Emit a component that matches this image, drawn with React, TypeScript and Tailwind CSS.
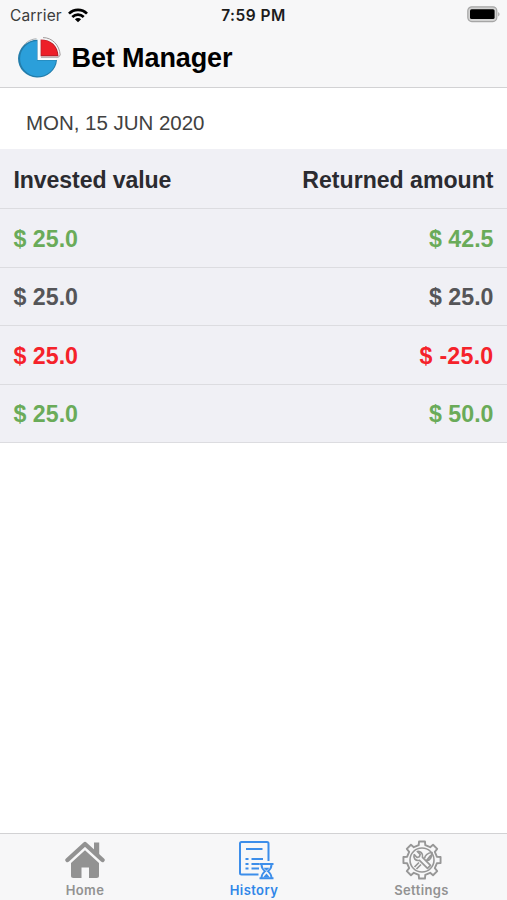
import React from "react";

interface Bet {
  invested: string;
  returned: string;
  color: string;
}

const bets: Bet[] = [
  { invested: "$ 25.0", returned: "$ 42.5", color: "text-[#6aab59]" },
  { invested: "$ 25.0", returned: "$ 25.0", color: "text-[#555558]" },
  { invested: "$ 25.0", returned: "$ -25.0", color: "text-[#f5222a]" },
  { invested: "$ 25.0", returned: "$ 50.0", color: "text-[#6aab59]" },
];

const WifiIcon = () => (
  <svg width="20" height="15" viewBox="0 0 20 15" fill="none" stroke="#000" strokeWidth="2.7">
    <path d="M1 5.6C6 .6 14 .6 19 5.6" />
    <path d="M4.3 9C7.6 5.8 12.4 5.8 15.7 9" />
    <path d="M10 14.3 6.9 11.3C8.7 9.7 11.3 9.7 13.1 11.3Z" fill="#000" stroke="none" />
  </svg>
);

const BatteryIcon = () => (
  <svg width="33" height="17" viewBox="0 0 33 17">
    <rect x=".8" y=".8" width="29" height="14.8" rx="4" fill="#d2d2d2" stroke="#a6a6a6" strokeWidth="1.2" />
    <rect x="3" y="3.2" width="24.6" height="9.8" rx="1.6" fill="#000" />
    <path d="M31.2 6v4.4c1.8-.7 1.8-3.7 0-4.4Z" fill="#a6a6a6" />
  </svg>
);

const Logo = () => (
  <svg width="44" height="44" viewBox="0 0 44 44">
    <path d="M3 14C6 7 12 3 18.5 2.8" fill="none" stroke="#a9adb0" strokeWidth="1" />
    <path d="M19.5 3.8V24H39A19.5 18.9 0 1 1 19.5 3.8Z" fill="#237dab" />
    <path d="M19 5V24.5H38A18 17.6 0 1 1 19 5Z" fill="#2b9fda" />
    <path d="M20.8 4V23.2H38" fill="none" stroke="#fff" strokeWidth="1.6" />
    <path d="M25 1.6C34 1.5 41.5 9 42.2 19L40.5 21.2H23" fill="none" stroke="#a09a9a" strokeWidth="1" />
    <path d="M22.6 3.5C33 3.5 40 9.5 40.5 20.3H22.6Z" fill="#b31f27" />
    <path d="M23.3 4C32.5 4 38.7 10 39.5 19.3H23.3Z" fill="#ed1f28" />
  </svg>
);

const HomeIcon = () => (
  <svg width="40" height="40" viewBox="0 0 40 40" fill="#929292">
    <path d="M2.5 20 20 4 37.5 20" fill="none" stroke="#929292" strokeWidth="4.4" strokeLinecap="round" strokeLinejoin="round" />
    <path d="M29 2.5h5.2v15L29 12.5Z" />
    <path d="M6 23 20 10.3 34 23v12.5c0 1.8-.8 2.5-2.5 2.5H24V27.5h-7.5V38H8.5C6.800 38 6 37.3 6 35.5Z" />
  </svg>
);

const HistoryIcon = () => (
  <svg width="36" height="40" viewBox="0 0 36 40" fill="none" stroke="#3d8eea" strokeWidth="2">
    <path d="M20.5 34.5H3.5a1.5 1.5 0 0 1-1.5-1.5V3.5A1.5 1.5 0 0 1 3.5 2h25.5a1.5 1.5 0 0 1 1.5 1.5V21" />
    <path d="M8 9h16.5M13.5 19h11.5M13.5 24h8M13.5 28.5h7.5M7.5 19h3M7.5 24h3M7.5 28.5h3" strokeWidth="1.9" />
    <path d="M21.500 24h14M21.500 38.300h14" />
    <path d="M23.5 24.5c0 4 1.5 5 3.5 6.7-2 1.8-3.5 3-3.5 6.8M33.5 24.5c0 4-1.5 5-3.5 6.7 2 1.8 3.5 3 3.5 6.8" strokeWidth="1.9" />
    <path d="M25.5 27.8h6l-3 3ZM25 37.5l3.5-4 3.5 4Z" fill="#3d8eea" stroke="none" />
  </svg>
);

// outline of an eight-toothed gear around 0,0
const gearPoints = Array.from({ length: 8 }, (_, i) =>
  [
    [-12.5, 15.2],
    [-9, 18.8],
    [9, 18.8],
    [12.5, 15.2],
  ].map(([deg, r]) => {
    const a = ((i * 45 + deg) * Math.PI) / 180;
    return `${(r * Math.sin(a)).toFixed(2)},${(-r * Math.cos(a)).toFixed(2)}`;
  })
)
  .flat()
  .join(" ");

const SettingsIcon = () => (
  <svg width="42" height="42" viewBox="-21 -21 42 42" fill="none" stroke="#979797" strokeWidth="1.9" strokeLinejoin="round">
    <polygon points={gearPoints} />
    <circle r="12" strokeWidth="1.6" />
    <g strokeWidth="1.7">
      <path d="M-7.8-5.3-5-2.5l2.4-.8.8-2.4-2.9-2.8C-2-9.3 1.5-6.5.5-2.7L8.5 5.3 5.5 8.3-2.5.3C-6.5 1.3-9-2-7.8-5.3Z" />
      <path d="M2.5-1.5C3-5 6-7 10-7.5 10-3 8 1 4.5.5L9-5M-3 2.5-7.5 7M-1 4.5-5.5 9" />
    </g>
  </svg>
);

const tabs = [
  { label: "Home", icon: <HomeIcon />, color: "text-[#929292]", iconSpacing: "pl-px", labelSpacing: "pl-px" },
  { label: "History", icon: <HistoryIcon />, color: "text-[#2f86e8]", iconSpacing: "pl-[4px]", labelSpacing: "pl-px" },
  { label: "Settings", icon: <SettingsIcon />, color: "text-[#929292]", iconSpacing: "pr-[2px]", labelSpacing: "pr-[2px]" },
];

export default function App() {
  return (
    <div className="flex h-[900px] w-[507px] flex-col overflow-hidden bg-white font-['Liberation_Sans',sans-serif]">
      <header className="h-[88px] border-b border-[#d2d2d4] bg-[#f7f7f8]">
        <div className="grid h-[30px] grid-cols-3 items-center pr-[7px] pl-[10px] font-[Inter,sans-serif]">
          <div className="flex items-center gap-[6px]">
            <span className="pt-px text-[15.5px] tracking-[0.15px] text-[#3c3c3c]">Carrier</span>
            <WifiIcon />
          </div>
          <span className="pt-px pr-[3px] text-center text-[15.5px] font-semibold tracking-[0.5px] text-[#1c1c1c]">
            7:59 PM
          </span>
          <div className="flex justify-end pb-px">
            <BatteryIcon />
          </div>
        </div>
        <div className="flex h-[56px] items-center gap-[9.5px] pl-[18px]">
          <Logo />
          <h1 className="text-[27px] leading-none font-bold tracking-[-0.1px]">Bet Manager</h1>
        </div>
      </header>

      <main className="flex-1">
        <p className="flex h-[61px] items-center pt-[9px] pl-[26px] text-[20.5px] tracking-[-0.03px] text-[#414141]">
          MON, 15 JUN 2020
        </p>
        <div className="bg-[#f0f0f5]">
          <div className="flex h-[60px] items-center justify-between border-b border-[#dcdce0] px-[13.5px] pt-[3px] text-[23.1px] font-bold text-[#2b2b30]">
            <span className="tracking-[-0.1px]">Invested value</span>
            <span>Returned amount</span>
          </div>
          {bets.map((bet, index) => (
            <div
              key={index}
              className={`flex h-[58.5px] items-center justify-between border-b border-[#dcdce0] px-[13.5px] pt-[3px] text-[23.2px] font-bold ${bet.color}`}
            >
              <span>{bet.invested}</span>
              <span className={bet.returned.includes("-") ? "tracking-[0.25px]" : ""}>{bet.returned}</span>
            </div>
          ))}
        </div>
      </main>

      <nav className="grid h-[67px] grid-cols-3 border-t border-[#d2d2d4] bg-[#f7f7f8] pt-[5px] font-[Inter,sans-serif]">
        {tabs.map((tab) => (
          <div key={tab.label} className={`flex flex-col items-center ${tab.color}`}>
            <div className={`flex h-[42px] items-center ${tab.iconSpacing}`}>{tab.icon}</div>
            <span className={`text-[13px] leading-[18px] font-semibold tracking-[0.4px] ${tab.labelSpacing}`}>
              {tab.label}
            </span>
          </div>
        ))}
      </nav>
    </div>
  );
}
